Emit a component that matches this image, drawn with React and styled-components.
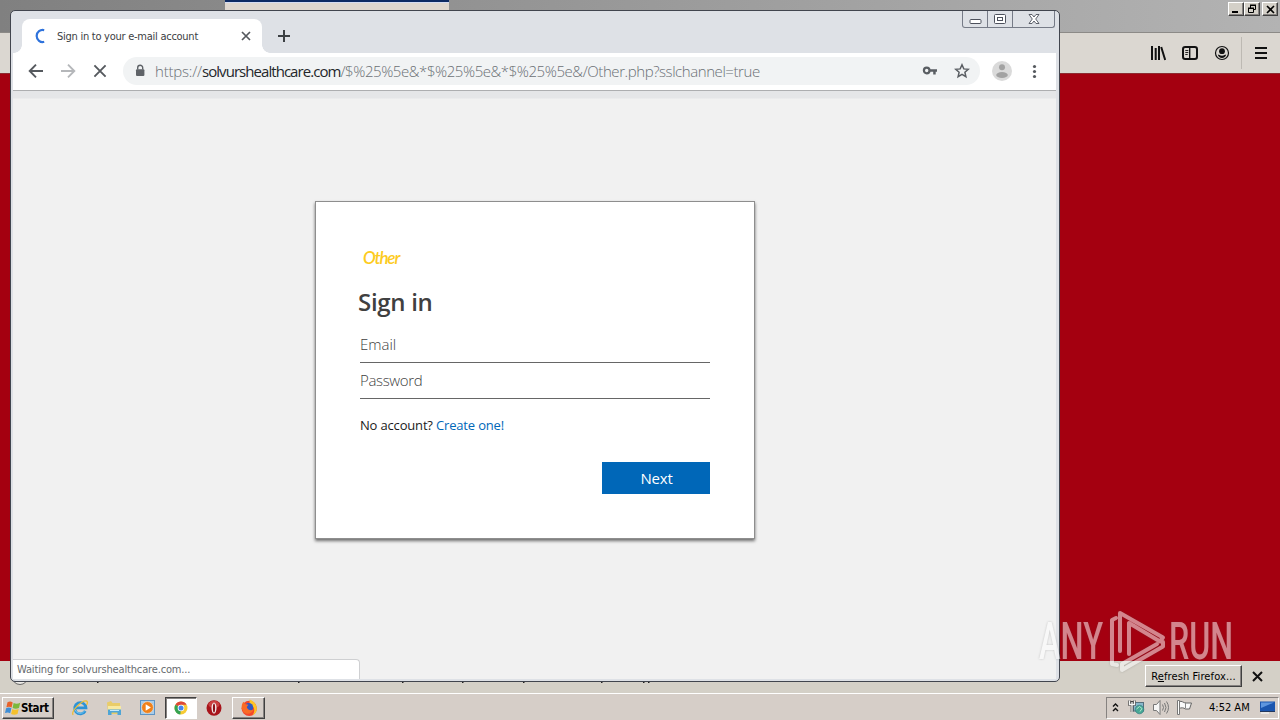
import React from 'react';
import styled, { createGlobalStyle, css } from 'styled-components';

const GlobalStyle = createGlobalStyle`
  * {
    box-sizing: border-box;
  }

  body {
    margin: 0;
    overflow: hidden;
    font-family: 'DejaVu Sans Condensed', 'DejaVu Sans', sans-serif;
    font-size: 11px;
  }

  svg {
    display: block;
    flex: none;
  }
`;

const raised = css`
  border: 1px solid;
  border-color: #ffffff #404040 #404040 #ffffff;
  box-shadow: inset -1px -1px 0 #868280;
`;

const Desktop = styled.div`
  position: relative;
  display: flex;
  flex-direction: column;
  width: 1280px;
  height: 720px;
  overflow: hidden;
  background-color: #d6cec8;
`;

const Label = styled.span`
  white-space: pre;
  letter-spacing: ${({ $spacing }) => $spacing || 0}px;
`;

/* Firefox */

const FirefoxTitle = styled.div`
  display: flex;
  justify-content: space-between;
  height: 33px;
  padding: 2px 2px 0 225px;
  background: linear-gradient(to right, #808080, #b3b3b3);
  border-bottom: 1px solid #8c8a87;
`;

const FirefoxTab = styled.div`
  width: 224px;
  height: 33px;
  margin-top: -2px;
  background-color: #ded6ce;
  border-top: 2px solid #0d2a63;
  box-shadow: inset 0 1px 0 #d5dcf2;
`;

const TitleButtons = styled.div`
  display: flex;
`;

const TitleButton = styled.button`
  ${raised}
  display: flex;
  align-items: center;
  justify-content: center;
  width: 16px;
  height: 14px;
  margin-left: ${({ $gap }) => $gap || 0}px;
  padding: 0;
  background-color: #d4d0c8;
`;

const FirefoxToolbar = styled.div`
  display: flex;
  align-items: center;
  justify-content: flex-end;
  height: 40px;
  padding-right: 12px;
  background-color: #dbd7d1;
`;

const ToolbarIcons = styled.div`
  display: flex;
  gap: 16px;
`;

const ToolbarDivider = styled.div`
  width: 1px;
  height: 32px;
  margin: 0 12px 0 11px;
  background-color: #bdb9b3;
`;

const FirefoxPage = styled.div`
  height: 588px;
  background-color: #a40010;
  border-top: 1px solid #8d2a30;
`;

const NotificationBar = styled.div`
  display: flex;
  align-items: center;
  justify-content: space-between;
  height: 32px;
  padding: 0 17px 2px 0;
  background-color: #d4d0c7;
`;

const NotificationActions = styled.div`
  display: flex;
  align-items: center;
  gap: 10px;
`;

const RefreshButton = styled.button`
  ${raised}
  width: 97px;
  height: 22px;
  padding: 0;
  font: inherit;
  white-space: nowrap;
  letter-spacing: 0.1px;
  background-color: #d4d0c8;
`;

/* Taskbar */

const TaskbarRow = styled.div`
  display: flex;
  align-items: center;
  height: 27px;
  padding: 1px 1px 0 2px;
  background-color: #d6cec8;
  border-top: 1px solid #ffffff;
`;

const StartButton = styled.button`
  ${raised}
  display: flex;
  align-items: center;
  width: 52px;
  height: 22px;
  margin-right: 9px;
  padding: 0 0 0 2px;
  font: bold 11.5px 'DejaVu Sans Condensed', 'DejaVu Sans', sans-serif;
  background-color: #d6cec8;
`;

const TaskButton = styled.button`
  display: flex;
  align-items: center;
  justify-content: center;
  width: 34px;
  height: 22px;
  padding: 0;
  background-color: transparent;
  border: none;

  ${({ $raised }) => $raised && css`
    ${raised}
    width: 33px;
    margin-left: 1px;
  `}
  ${({ $pressed }) => $pressed && css`
    width: 32px;
    background-color: #ffffff;
    border: 1px solid;
    border-color: #404040 #ffffff #ffffff #404040;
    box-shadow: inset 1px 1px 0 #868280;
  `}
`;

const Tray = styled.div`
  display: flex;
  align-items: center;
  width: 173px;
  height: 22px;
  margin-left: auto;
  padding-left: 4px;
  border: 1px solid;
  border-color: #868280 #ffffff #ffffff #868280;
`;

const TrayIcons = styled.div`
  display: flex;
  align-items: center;
  gap: 7px;
  margin-right: 16px;

  svg:first-child {
    margin-right: 1px;
  }
`;

const Clock = styled.div`
  width: 50px;
  white-space: nowrap;
`;

/* Chrome */

const ChromeWindow = styled.div`
  position: absolute;
  top: 10px;
  left: 10px;
  display: flex;
  flex-direction: column;
  width: 1050px;
  height: 672px;
  padding: 0 3px 2px 2px;
  background-color: #dee1e6;
  border: 1px solid #41454e;
  border-radius: 5px;
  overflow: hidden;
`;

const TabStrip = styled.div`
  display: flex;
  height: 42px;
  padding-left: 9px;
`;

const Tab = styled.div`
  position: relative;
  display: flex;
  align-items: center;
  width: 240px;
  height: 34px;
  margin-top: 8px;
  padding: 0 10px 0 12px;
  color: #3c4043;
  background-color: #ffffff;
  border-radius: 8px 8px 0 0;

  &::before,
  &::after {
    position: absolute;
    bottom: 0;
    width: 8px;
    height: 8px;
    content: '';
  }

  &::before {
    right: 100%;
    background: radial-gradient(circle at 0 0, transparent 7.5px, #ffffff 8px);
  }

  &::after {
    left: 100%;
    background: radial-gradient(circle at 100% 0, transparent 7.5px, #ffffff 8px);
  }
`;

const TabTitle = styled.div`
  flex: 1;
  margin-left: 9px;
  white-space: nowrap;
  letter-spacing: -0.26px;
`;

const NewTab = styled.div`
  margin: 19px 0 0 16px;
`;

const WindowButtons = styled.div`
  display: flex;
  width: 93px;
  height: 17px;
  margin: 0 1px 0 auto;
  border: 1px solid #767b87;
  border-top: none;
  border-radius: 0 0 3px 3px;
`;

const WindowButton = styled.div`
  display: flex;
  flex: ${({ $wide }) => ($wide ? '1' : '0 0 25px')};
  align-items: center;
  justify-content: center;
  border-right: ${({ $wide }) => ($wide ? 'none' : '1px solid #767b87')};
`;

const ChromeToolbar = styled.div`
  display: flex;
  align-items: center;
  height: 38px;
  padding: 0 12px 1px 13px;
  background-color: #ffffff;
  border-bottom: 1px solid #adaeb0;
`;

const NavButtons = styled.div`
  display: flex;
  gap: 12px;
  margin-right: 13px;
`;

const Omnibox = styled.div`
  display: flex;
  align-items: center;
  width: 857px;
  height: 28px;
  padding: 0 10px 0 9px;
  background-color: #f1f3f4;
  border-radius: 14px;
`;

const Url = styled.div`
  flex: 1;
  margin: -1px 0 0 7px;
  font: 300 15px/20px 'Open Sans', sans-serif;
  color: #6b7075;
  white-space: nowrap;
`;

const Host = styled(Label)`
  font-weight: 400;
  color: #24272b;
`;

const OmniboxIcons = styled.div`
  display: flex;
  gap: 16px;
`;

const ToolbarEnd = styled.div`
  display: flex;
  align-items: center;
  gap: 14px;
  margin-left: 12px;
`;

const Page = styled.main`
  position: relative;
  display: flex;
  flex: 1;
  align-items: flex-start;
  justify-content: center;
  padding: 110px 0 0 1px;
  background: linear-gradient(#e5e6e8 7px, #f1f1f1 8px);
`;

const StatusBubble = styled.div`
  position: absolute;
  bottom: 0;
  left: 0;
  width: 347px;
  height: 20px;
  padding: 3px 3px 3px 4px;
  color: #666a6e;
  white-space: nowrap;
  letter-spacing: -0.15px;
  background-color: #ffffff;
  border: 1px solid #cfd0d2;
  border-width: 1px 1px 0 0;
  border-radius: 0 4px 0 0;
`;

/* Sign in form */

const Card = styled.form`
  display: flex;
  flex-direction: column;
  width: 440px;
  height: 338px;
  padding: 44px;
  font-family: 'Open Sans', 'Noto Sans', sans-serif;
  background-color: #ffffff;
  border: 1px solid #8e8e8e;
  box-shadow: 0 2px 3px rgba(0, 0, 0, 0.55);
`;

const Brand = styled.div`
  height: 28px;
  padding: 0 0 0 3px;
  font: italic 600 17px/23px Lato, sans-serif;
  color: #fdcb21;
  letter-spacing: -1.2px;
`;

const Heading = styled.h1`
  margin: 10px 0 0 -2px;
  font: 600 24px/36px 'Open Sans', sans-serif;
  color: #404040;
  letter-spacing: -0.3px;
`;

const Field = styled.input`
  width: 350px;
  height: 36px;
  padding: 0 0 2px;
  font: 300 15px 'Open Sans', sans-serif;
  letter-spacing: ${({ $spacing }) => $spacing || 0}px;
  background-color: transparent;
  border: none;
  border-bottom: 1px solid #666666;
  border-radius: 0;

  &::placeholder {
    color: #404040;
    opacity: 1;
  }
`;

const Fields = styled.div`
  display: flex;
  flex-direction: column;
  margin-top: 7px;
`;

const Hint = styled.p`
  margin: 16px 0 0;
  font-size: 13px;
  line-height: 20px;
  color: #1b1b1b;
  letter-spacing: -0.17px;
`;

const HintLink = styled.a`
  color: #0067b8;
`;

const NextButton = styled.button`
  flex: none;
  align-self: flex-end;
  width: 108px;
  height: 32px;
  margin-top: 27px;
  padding: 0 0 0 1px;
  font: 400 15px 'Open Sans', sans-serif;
  letter-spacing: -0.2px;
  color: #ffffff;
  background-color: #0067b8;
  border: none;
`;

const Watermark = styled.svg`
  position: absolute;
  top: 596px;
  left: 1026px;
  filter: drop-shadow(0 0 1px rgba(70, 70, 70, 0.5));
`;

const Specks = () => (
  <svg width="660" height="32" viewBox="0 0 660 32">
    <circle cx="20" cy="16.5" r="8" fill="#eceae6" stroke="#686866" />
    <g fill="#222">
      {[97, 298, 402, 462, 523, 601, 643, 648].map((x) => (
        <rect key={x} x={x} y="21" width="1.5" height="2" />
      ))}
    </g>
  </svg>
);

const LibraryIcon = () => (
  <svg width="16" height="16" viewBox="0 0 16 16" fill="none" stroke="#111" strokeWidth="2">
    <path d="M2 1v14M5.7 3v12M9 1v14M11.2 2l4 13" />
  </svg>
);

const SidebarIcon = () => (
  <svg width="16" height="16" viewBox="0 0 16 16" fill="none" stroke="#111">
    <rect x="1" y="2" width="14" height="12" rx="2.2" strokeWidth="2" />
    <path d="M7.7 2v12" strokeWidth="1.4" />
    <path d="M3.3 5.500h3M3.3 7.500h3M3.3 9.500h2.4" strokeWidth=".9" />
  </svg>
);

const AccountIcon = () => (
  <svg width="16" height="16" viewBox="0 0 16 16">
    <circle cx="8" cy="8" r="6.5" fill="none" stroke="#111" strokeWidth="1.2" />
    <circle cx="8" cy="6.2" r="2.9" fill="#111" />
    <path d="M3.8 9.6c1.4 0 1.8 1.2 4.2 1.2s2.8-1.2 4.2-1.2c-.5 2-2 3.4-4.2 3.4S4.3 11.6 3.8 9.6z" fill="#111" />
  </svg>
);

const MenuIcon = () => (
  <svg width="14" height="14" viewBox="0 0 14 14" stroke="#111" strokeWidth="2">
    <path d="M1 2h12M1 7h12M1 12h12" />
  </svg>
);

const CrossIcon = ({ size, color, width = 2, inset = 1 }) => (
  <svg width={size} height={size} viewBox={`0 0 ${size} ${size}`} stroke={color} strokeWidth={width}>
    <path d={`M${inset} ${inset}L${size - inset} ${size - inset}M${size - inset} ${inset}L${inset} ${size - inset}`} />
  </svg>
);

const ArrowIcon = ({ color, flip }) => (
  <svg width="20" height="20" viewBox="0 0 20 20" fill="none" stroke={color} strokeWidth="1.9">
    <path d={flip ? 'M3 10h13M10 3.7L16.3 10L10 16.3' : 'M17 10H4M10 3.7L3.7 10L10 16.3'} />
  </svg>
);

const LockIcon = () => (
  <svg width="16" height="16" viewBox="0 0 16 16">
    <rect x="4" y="6.2" width="8.4" height="6.8" rx="1" fill="#5f6368" />
    <path d="M5.7 6.5V4.8a2.5 2.5 0 0 1 5 0v1.7" fill="none" stroke="#5f6368" strokeWidth="1.4" />
  </svg>
);

const KeyIcon = () => (
  <svg width="16" height="16" viewBox="0 0 16 16">
    <circle cx="4.7" cy="7.5" r="2.8" fill="none" stroke="#5a5e63" strokeWidth="2.2" />
    <path d="M7.5 6.3H15v2.5h-1.3v2.7h-2.5V8.8H7.5z" fill="#5a5e63" />
  </svg>
);

const StarIcon = () => (
  <svg width="16" height="16" viewBox="0 0 16 16">
    <path
      d="M8 1.8l1.8 4.1 4.5.4-3.4 3 1 4.4L8 11.4l-3.9 2.3 1-4.4-3.4-3 4.5-.4z"
      fill="none"
      stroke="#5a5e63"
      strokeWidth="1.5"
    />
  </svg>
);

const AvatarIcon = () => (
  <svg width="20" height="20" viewBox="0 0 20 20">
    <circle cx="10" cy="10" r="10" fill="#dadada" />
    <circle cx="10" cy="6.2" r="3" fill="#a2a2a2" />
    <ellipse cx="10" cy="14" rx="5.8" ry="3" fill="#a2a2a2" />
  </svg>
);

const DotsIcon = () => (
  <svg width="16" height="16" viewBox="0 0 16 16" fill="#55595e">
    <circle cx="8.5" cy="3.5" r="1.6" />
    <circle cx="8.5" cy="8.5" r="1.6" />
    <circle cx="8.5" cy="13.5" r="1.6" />
  </svg>
);

const StartLogo = () => (
  <svg width="16" height="16" viewBox="0 0 16 16">
    <path d="M2.5 2.2c1.9-1.1 3.6-1 5.2.2L6.6 7.5C5 6.4 3.2 6.4 1.4 7.2z" fill="#e8622a" />
    <path d="M8.600 3c2 1.1 4.200 1.100 6.600-.2L14 7.900c-2.200 1.100-4.300 1.100-6.400 0z" fill="#7cb83c" />
    <path d="M1.1 8.2c1.9-1 3.7-.9 5.3.1l-1.2 5c-1.7-1.2-3.4-1-5.2-.2z" fill="#3f8ed6" />
    <path d="M7.3 8.9c2 1.1 4.2 1.1 6.4.1l-1.2 4.9c-2.200 1.100-4.500 1.100-6.400 0z" fill="#f5c12e" />
  </svg>
);

const ExplorerIcon = () => (
  <svg width="18" height="18" viewBox="0 0 18 18" fill="none">
    <path d="M14.3 12a5.7 5.7 0 1 1 .7-3.2H5" stroke="#2d93d6" strokeWidth="2.7" />
    <path d="M13.8 11.7a5.5 5.5 0 0 1-9.9-1" stroke="#75c9f2" strokeWidth="1" />
    <path d="M2.2 15.9C-.6 12.5 10.8 1.3 15.4 2c1.5.3 1.2 2.2.2 4" stroke="#ecbd35" strokeWidth="1.3" />
  </svg>
);

const FolderIcon = () => (
  <svg width="18" height="18" viewBox="0 0 18 18">
    <path d="M2 3.5l4-1.500 1.500 2H15v11H3z" fill="#e9cc68" />
    <path d="M3 7h13v4H3z" fill="#f8e9a1" />
    <path d="M3 16V10.5h13V16h-3.500v-2.500h-6V16z" fill="#4fa5d6" />
    <path d="M5 11.5h9" stroke="#c6eafa" />
  </svg>
);

const MediaIcon = () => (
  <svg width="18" height="18" viewBox="0 0 18 18">
    <rect x="1.5" y="1.5" width="14" height="14" fill="#a8cdea" stroke="#5e94c4" />
    <circle cx="8.5" cy="8.5" r="5.9" fill="#f08019" stroke="#e7e7e7" strokeWidth=".6" />
    <path d="M6.7 5.2l5.2 3.3-5.2 3.3z" fill="#ffffff" />
  </svg>
);

const ChromeIcon = () => (
  <svg width="16" height="16" viewBox="0 0 16 16">
    <circle cx="8" cy="8" r="6.5" fill="#f7cb35" />
    <path d="M8 8L2.4 4.7A6.5 6.5 0 0 1 13.6 4.7H8z" fill="#de4839" />
    <path d="M8 8l-.7 6.5A6.5 6.5 0 0 1 2.4 4.7z" fill="#35a352" />
    <circle cx="8" cy="8" r="3.3" fill="#ffffff" />
    <circle cx="8" cy="8" r="2.5" fill="#4585ed" />
  </svg>
);

const OperaIcon = () => (
  <svg width="18" height="18" viewBox="0 0 18 18">
    <ellipse cx="9" cy="9" rx="7.5" ry="7.8" fill="#a8141b" />
    <ellipse cx="9" cy="5.5" rx="5.5" ry="3.7" fill="#cb4040" />
    <ellipse cx="9" cy="9" rx="2.5" ry="5.6" fill="#f5eeee" />
    <ellipse cx="9" cy="9" rx="1.1" ry="4.5" fill="#8c1117" />
  </svg>
);

const FirefoxIcon = () => (
  <svg width="18" height="18" viewBox="0 0 16 16">
    <circle cx="8.2" cy="8.3" r="6.8" fill="#f4462c" />
    <path d="M8.5.5c3 1 6.5 4 6.5 8.3a6.7 6.7 0 0 1-4 5.7c3-4 2-8-2.5-10z" fill="#ffc425" />
    <circle cx="7.8" cy="7.5" r="3.9" fill="#2f58c4" />
    <path d="M1.5 8.5C1.3 5.5 2 4 3 2.5l1.5 2L7.5 5 6 7c1 3 4 3.7 6 2-1 4-6 5.5-9 2.5" fill="#fa6b25" />
  </svg>
);

const ChevronsIcon = () => (
  <svg width="9" height="12" viewBox="0 0 9 12" fill="none" stroke="#111" strokeWidth="1.4">
    <path d="M2 4.5L4.5 2 7 4.5M2 9L4.5 6.5 7 9" />
  </svg>
);

const NetworkIcon = () => (
  <svg width="17" height="17" viewBox="0 0 17 17">
    <rect x="5.5" y="3.5" width="10" height="8.5" fill="#88b8cc" stroke="#566f7d" />
    <circle cx="11.5" cy="10.5" r="4.3" fill="#48a895" stroke="#367b82" strokeWidth=".7" />
    <path d="M8.5 10l3-2.5 2.5 2-2 3" fill="none" stroke="#b3e8d0" />
    <path d="M1.5 1.5v4h5v-4M4 2v11" fill="none" stroke="#444" strokeWidth="2.6" />
    <path d="M1.5 1.5v4h5v-4M4 3v10" fill="none" stroke="#f4f4f4" strokeWidth="1.3" />
  </svg>
);

const SpeakerIcon = () => (
  <svg width="17" height="17" viewBox="0 0 17 17" fill="none" stroke="#777">
    <path d="M1.5 5.5h3l3.5-4v14l-3.5-4h-3z" fill="#f6f6f6" />
    <path d="M10.5 5.5q2 3 0 6M12.5 4q3 4.5 0 9M14.5 2.5q4 6 0 12" />
  </svg>
);

const FlagIcon = () => (
  <svg width="17" height="17" viewBox="0 0 17 17">
    <path d="M3 2.5c3-1 4.5 1.5 7 1.5h5.5l-2 6H9.5c-2-1.5-4-1.5-6.5-.5z" fill="#fafafa" stroke="#666" />
    <path d="M9.5 3.5v6" stroke="#888" />
    <path d="M1.5 1.5h2v14h-2z" fill="#ffffff" stroke="#777" />
  </svg>
);

const MonitorIcon = () => (
  <svg width="17" height="17" viewBox="0 0 17 17">
    <path d="M1 2.5h15V12H1z" fill="#1b56af" />
    <path d="M2 3.5h13L2 9z" fill="#5e96df" />
    <path d="M2 14h8" stroke="#efefef" strokeWidth="1.5" />
    <path d="M1 12.5h15" stroke="#23385e" />
  </svg>
);

const Firefox = () => (
  <>
    <FirefoxTitle>
      <FirefoxTab />
      <TitleButtons>
        <TitleButton type="button" aria-label="Minimize">
          <svg width="12" height="10" viewBox="0 0 12 10"><path d="M2 8h6" stroke="#000" strokeWidth="2" /></svg>
        </TitleButton>
        <TitleButton type="button" aria-label="Restore">
          <svg width="12" height="10" viewBox="0 0 12 10" fill="none" stroke="#000">
            <path d="M4.5 4V1.5h5v4H8M4 1.5h6M2.5 4.5h5v4h-5zM2 4.5h6" />
            <path d="M4 1h6M2 4h6" />
          </svg>
        </TitleButton>
        <TitleButton type="button" aria-label="Close" $gap={2}>
          <CrossIcon size={9} color="#000" width={1.6} inset={1} />
        </TitleButton>
      </TitleButtons>
    </FirefoxTitle>
    <FirefoxToolbar>
      <ToolbarIcons>
        <LibraryIcon />
        <SidebarIcon />
        <AccountIcon />
      </ToolbarIcons>
      <ToolbarDivider />
      <MenuIcon />
    </FirefoxToolbar>
    <FirefoxPage />
    <NotificationBar>
      <Specks />
      <NotificationActions>
        <RefreshButton type="button">R<u>e</u>fresh Firefox...</RefreshButton>
        <CrossIcon size={11} color="#111" width={2} />
      </NotificationActions>
    </NotificationBar>
  </>
);

const Taskbar = () => (
  <TaskbarRow>
    <StartButton type="button">
      <StartLogo />
      <Label $spacing={-0.4}>Start</Label>
    </StartButton>
    <TaskButton><ExplorerIcon /></TaskButton>
    <TaskButton><FolderIcon /></TaskButton>
    <TaskButton><MediaIcon /></TaskButton>
    <TaskButton $pressed><ChromeIcon /></TaskButton>
    <TaskButton><OperaIcon /></TaskButton>
    <TaskButton $raised><FirefoxIcon /></TaskButton>
    <Tray>
      <TrayIcons>
        <ChevronsIcon />
        <NetworkIcon />
        <SpeakerIcon />
        <FlagIcon />
      </TrayIcons>
      <Clock>4:52 AM</Clock>
      <MonitorIcon />
    </Tray>
  </TaskbarRow>
);

const SignInCard = () => (
  <Card>
    <Brand>Other</Brand>
    <Heading>Sign in</Heading>
    <Fields>
      <Field type="text" placeholder="Email" />
      <Field type="password" placeholder="Password" $spacing={-0.35} />
    </Fields>
    <Hint>No account? <HintLink>Create one!</HintLink></Hint>
    <NextButton type="button">Next</NextButton>
  </Card>
);

const Chrome = () => (
  <ChromeWindow>
    <TabStrip>
      <Tab>
        <svg width="14" height="16" viewBox="0 0 14 16">
          <path d="M10.2 2.2A6 6 0 1 0 10.2 13.8" fill="none" stroke="#2f73dc" strokeWidth="2.2" />
        </svg>
        <TabTitle>Sign in to your e-mail account</TabTitle>
        <CrossIcon size={12} color="#55595e" width={1.7} inset={2} />
      </Tab>
      <NewTab>
        <svg width="12" height="12" viewBox="0 0 12 12" stroke="#3c4043" strokeWidth="2">
          <path d="M6 0v12M0 6h12" />
        </svg>
      </NewTab>
      <WindowButtons>
        <WindowButton>
          <svg width="13" height="15" viewBox="0 0 13 15">
            <rect x="1" y="7.5" width="11" height="4" rx="1" fill="#fff" stroke="#4d515c" />
          </svg>
        </WindowButton>
        <WindowButton>
          <svg width="12" height="11" viewBox="0 0 12 11" fill="#fff" stroke="#4d515c">
            <rect x=".5" y=".5" width="11" height="9" rx="1" />
            <rect x="3.5" y="3.5" width="5" height="3" />
          </svg>
        </WindowButton>
        <WindowButton $wide>
          <svg width="12" height="12" viewBox="0 0 12 12">
            <path d="M1 1.5h3L6 4l2-2.5h3L7.7 6l3.3 4.500H8L6 8l-2 2.500H1L4.300 6z" fill="#fff" stroke="#4d515c" strokeWidth=".9" />
          </svg>
        </WindowButton>
      </WindowButtons>
    </TabStrip>
    <ChromeToolbar>
      <NavButtons>
        <ArrowIcon color="#55595e" />
        <ArrowIcon color="#b5b7ba" flip />
        <CrossIcon size={20} color="#55595e" width={1.9} inset={4.4} />
      </NavButtons>
      <Omnibox>
        <LockIcon />
        <Url>
          <Label $spacing={-0.2}>https://</Label>
          <Host $spacing={-0.95}>solvurshealthcare.com</Host>
          <Label $spacing={-0.43}>/$%25%5e&*$%25%5e&*$%25%5e&/Other.php?sslchannel=true</Label>
        </Url>
        <OmniboxIcons>
          <KeyIcon />
          <StarIcon />
        </OmniboxIcons>
      </Omnibox>
      <ToolbarEnd>
        <AvatarIcon />
        <DotsIcon />
      </ToolbarEnd>
    </ChromeToolbar>
    <Page>
      <SignInCard />
      <StatusBubble>Waiting for solvurshealthcare.com...</StatusBubble>
    </Page>
  </ChromeWindow>
);

const WatermarkLogo = () => (
  <Watermark width="254" height="100" viewBox="-10 -10 254 100" opacity="0.52">
    <g fill="#ffffff" fontFamily="Roboto, sans-serif" fontSize="51" fontWeight="500">
      <text x="3" y="53" textLength="64" lengthAdjust="spacingAndGlyphs">ANY</text>
      <text x="133" y="53" textLength="64" lengthAdjust="spacingAndGlyphs">RUN</text>
    </g>
    <g fill="none" stroke="#ffffff" strokeWidth="4" strokeLinejoin="round" strokeLinecap="round">
      <path d="M80 12l-4 2v44l5 1" />
      <path d="M84 45V7l43 24.5-3 4L93 17v31" />
      <path d="M121 38L86 58v6l41-23.5V36" />
    </g>
  </Watermark>
);

const App = () => {
  return (
    <>
      <GlobalStyle />
      <Desktop>
        <Firefox />
        <Taskbar />
        <Chrome />
        <WatermarkLogo />
      </Desktop>
    </>
  );
};

export default App;
